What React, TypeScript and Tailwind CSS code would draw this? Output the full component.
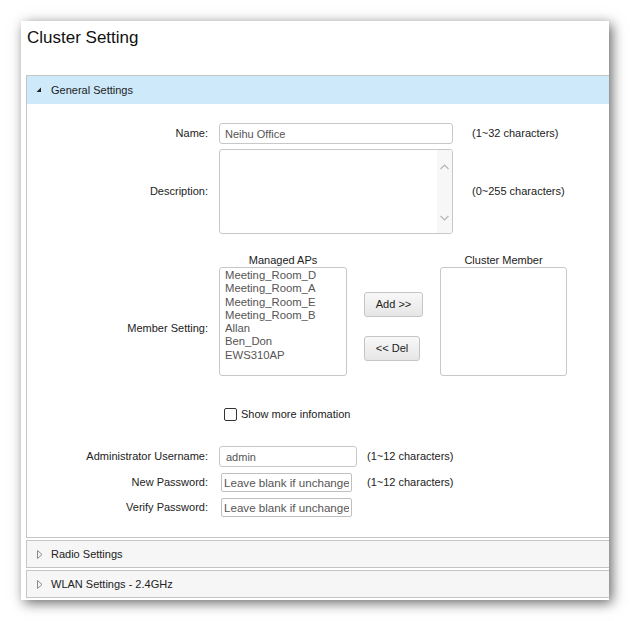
import React from "react";

const font = { fontFamily: '"Liberation Sans", Arial, sans-serif' };

function ExpandedIcon() {
  return (
    <svg width="6" height="6" viewBox="0 0 6 6" className="shrink-0">
      <path d="M5 0.5 L5 5 L0.5 5 Z" fill="#222" />
    </svg>
  );
}

function CollapsedIcon() {
  return (
    <svg width="6" height="9" viewBox="0 0 6 9" className="shrink-0">
      <path d="M0.5 0.5 L5 4.5 L0.5 8.5 Z" fill="none" stroke="#8a8a8a" strokeWidth="1" />
    </svg>
  );
}

function Chevron({ up }: { up?: boolean }) {
  return (
    <svg width="9" height="6" viewBox="0 0 9 6">
      <path
        d={up ? "M0.5 5 L4.5 1 L8.5 5" : "M0.5 1 L4.5 5 L8.5 1"}
        fill="none"
        stroke="#b5b5b5"
        strokeWidth="1.2"
      />
    </svg>
  );
}

function Label({ children }: { children: React.ReactNode }) {
  return <div className="w-[181px] shrink-0 text-right text-[11px] text-[#222]">{children}</div>;
}

function Hint({ children, className = "" }: { children: React.ReactNode; className?: string }) {
  return <div className={"text-[11px] text-[#222] " + className}>{children}</div>;
}

const aps = [
  "Meeting_Room_D",
  "Meeting_Room_A",
  "Meeting_Room_E",
  "Meeting_Room_B",
  "Allan",
  "Ben_Don",
  "EWS310AP",
];

export default function App() {
  return (
    <div className="w-[630px] h-[621px] bg-white pt-[21px] pl-[21px]" style={font}>
      <div className="w-[588px] h-[579px] bg-white overflow-hidden shadow-[3px_3px_12px_rgba(0,0,0,0.6)]">
        <div className="h-[54px] pl-[6px] pt-[7px] text-[17px] leading-[20px] text-[#111]">
          Cluster Setting
        </div>
        <div className="ml-[5px] w-[620px]">
          {/* General Settings header */}
          <div className="h-[29px] border-t border-l border-[#c5c5c5] bg-[#cde9fa] flex items-center pl-[9px] gap-[9px]">
            <ExpandedIcon />
            <span className="text-[11px] text-[#222]">General Settings</span>
          </div>
          {/* Body */}
          <div className="border-l border-b border-[#c5c5c5] bg-white pt-[19px] pb-[20px]">
            {/* Name */}
            <div className="flex items-center h-[21px]">
              <Label>Name:</Label>
              <input
                readOnly
                value="Neihu Office"
                className="ml-[11px] w-[234px] h-[21px] border border-[#c8c8c8] rounded-[3px] px-[5px] text-[11px] text-[#555] outline-none"
                style={font}
              />
              <Hint className="ml-[19px]">(1~32 characters)</Hint>
            </div>
            {/* Description */}
            <div className="flex items-center mt-[5px] h-[85px]">
              <Label>Description:</Label>
              <div className="ml-[11px] w-[234px] h-[85px] border border-[#c8c8c8] rounded-[3px] flex overflow-hidden">
                <div className="flex-1" />
                <div className="w-[15px] bg-[#f7f7f7] flex flex-col items-center justify-between pt-[14px] pb-[12px]">
                  <Chevron up />
                  <Chevron />
                </div>
              </div>
              <Hint className="ml-[19px]">(0~255 characters)</Hint>
            </div>
            {/* Member Setting */}
            <div className="flex items-start mt-[20px]">
              <div className="w-[181px] shrink-0 text-right text-[11px] text-[#222] pt-[66px]">
                Member Setting:
              </div>
              <div className="ml-[11px] flex items-start">
                <div className="w-[128px] flex flex-col">
                  <div className="h-[13px] leading-[13px] text-center text-[11px] text-[#222]">Managed APs</div>
                  <div className="h-[109px] border border-[#c8c8c8] rounded-[3px] pl-[5px] pt-[1px]">
                    {aps.map((a) => (
                      <div key={a} className="text-[11.3px] leading-[13.3px] text-[#555]">
                        {a}
                      </div>
                    ))}
                  </div>
                </div>
                <div className="ml-[17px] mt-[38px] flex flex-col items-start gap-[19px]">
                  <button
                    className="w-[59px] h-[25px] border border-[#c5c5c5] rounded-[3px] bg-gradient-to-b from-[#f8f8f8] to-[#e6e6e6] text-[11px] text-[#222]"
                    style={font}
                  >
                    Add &gt;&gt;
                  </button>
                  <button
                    className="w-[56px] h-[25px] border border-[#c5c5c5] rounded-[3px] bg-gradient-to-b from-[#f8f8f8] to-[#e6e6e6] text-[11px] text-[#222]"
                    style={font}
                  >
                    &lt;&lt; Del
                  </button>
                </div>
                <div className="ml-[17px] w-[127px] flex flex-col">
                  <div className="h-[13px] leading-[13px] text-center text-[11px] text-[#222]">Cluster Member</div>
                  <div className="h-[109px] border border-[#c8c8c8] rounded-[3px]" />
                </div>
              </div>
            </div>
            {/* Checkbox */}
            <div className="flex items-center mt-[32px] h-[13px]">
              <div className="w-[181px] shrink-0" />
              <div className="ml-[16px] flex items-center">
                <div className="w-[13px] h-[13px] border border-[#333] rounded-[2px] bg-white" />
                <span className="ml-[4px] text-[11px] text-[#222]">Show more infomation</span>
              </div>
            </div>
            {/* Admin username */}
            <div className="flex items-center mt-[25px] h-[21px]">
              <Label>Administrator Username:</Label>
              <input
                readOnly
                value="admin"
                className="ml-[11px] w-[138px] h-[21px] border border-[#c8c8c8] rounded-[3px] px-[6px] text-[11px] text-[#555] outline-none"
                style={font}
              />
              <Hint className="ml-[10px]">(1~12 characters)</Hint>
            </div>
            {/* New Password */}
            <div className="flex items-center mt-[6px] h-[19px]">
              <Label>New Password:</Label>
              <input
                readOnly
                placeholder="Leave blank if unchanged"
                className="ml-[13px] w-[131px] h-[19px] border border-[#c0c0c0] rounded-[2px] px-[2px] text-[11.6px] text-[#555] placeholder:text-[#555] outline-none"
                style={font}
              />
              <Hint className="ml-[15px]">(1~12 characters)</Hint>
            </div>
            {/* Verify Password */}
            <div className="flex items-center mt-[6px] h-[19px]">
              <Label>Verify Password:</Label>
              <input
                readOnly
                placeholder="Leave blank if unchanged"
                className="ml-[13px] w-[131px] h-[19px] border border-[#c0c0c0] rounded-[2px] px-[2px] text-[11.6px] text-[#555] placeholder:text-[#555] outline-none"
                style={font}
              />
            </div>
          </div>
          {/* Radio Settings */}
          <div className="mt-[2px] h-[28px] border border-r-0 border-[#c5c5c5] bg-[#f6f6f6] flex items-center pl-[10px] gap-[8px]">
            <CollapsedIcon />
            <span className="text-[11px] text-[#222]">Radio Settings</span>
          </div>
          {/* WLAN Settings */}
          <div className="mt-[2px] h-[28px] border border-r-0 border-[#c5c5c5] bg-[#f6f6f6] flex items-center pl-[10px] gap-[8px]">
            <CollapsedIcon />
            <span className="text-[11px] text-[#222]">WLAN Settings - 2.4GHz</span>
          </div>
        </div>
      </div>
    </div>
  );
}
